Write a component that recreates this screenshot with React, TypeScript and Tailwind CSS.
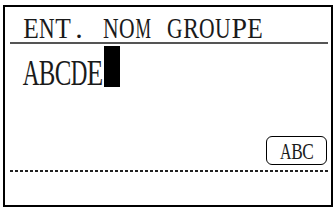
const serif = { fontFamily: '"Liberation Serif", "DejaVu Serif", serif' };

const titleScale: Record<string, string> = {
  A: "scale-x-[0.72]",
  D: "scale-x-[0.72]",
  G: "scale-x-[0.72]",
  N: "scale-x-[0.72]",
  O: "scale-x-[0.72]",
  U: "scale-x-[0.72]",
  B: "scale-x-[0.78]",
  C: "scale-x-[0.78]",
  R: "scale-x-[0.78]",
  E: "scale-x-[0.85]",
  T: "scale-x-[0.85]",
  P: "scale-x-[0.93]",
  M: "scale-x-[0.58]",
};

const inputScale: Record<string, string> = {
  A: "scale-x-[0.64]",
  D: "scale-x-[0.64]",
  B: "scale-x-[0.69]",
  C: "scale-x-[0.69]",
  E: "scale-x-[0.75]",
};

const btnScale: Record<string, string> = {
  A: "scale-x-[0.66]",
  B: "scale-x-[0.72]",
  C: "scale-x-[0.72]",
};

function TitleText({ text }: { text: string }) {
  return (
    <div className="flex" style={serif}>
      {text.split("").map((ch, i) => (
        <span key={i} className="flex justify-center w-[16px] h-[30px] text-[30px] leading-[30px] text-[#1a1a1a]">
          <span className={`inline-block shrink-0 ${titleScale[ch] ?? ""}`}>{ch === " " ? "\u00a0" : ch}</span>
        </span>
      ))}
    </div>
  );
}

function InputText({ text }: { text: string }) {
  return (
    <div className="flex" style={serif}>
      {text.split("").map((ch, i) => (
        <span key={i} className="flex justify-center w-[16px] h-[36px] text-[36px] leading-[36px] text-[#1a1a1a]">
          <span className={`inline-block shrink-0 ${inputScale[ch] ?? ""}`}>{ch}</span>
        </span>
      ))}
    </div>
  );
}

function BtnText({ text }: { text: string }) {
  return (
    <div className="flex" style={serif}>
      {text.split("").map((ch, i) => (
        <span key={i} className="flex justify-center w-[11px] h-[24px] text-[24px] leading-[24px] text-[#1a1a1a]">
          <span className={`inline-block shrink-0 ${btnScale[ch] ?? ""}`}>{ch}</span>
        </span>
      ))}
    </div>
  );
}

export default function App() {
  return (
    <div className="w-[335px] h-[209px] bg-white pt-[5px] pl-[3px]">
      <div className="w-[330px] h-[202px] border-2 border-black flex flex-col">
        <div className="ml-[5px] mr-[3px] h-[37px] border-b-2 border-[#555] pl-[13px] pt-[6px] flex items-start">
          <TitleText text="ENT. NOM GROUPE" />
        </div>
        <div className="pl-[18px] h-[43px] flex items-start">
          <div className="mt-[11px]">
            <InputText text="ABCDE" />
          </div>
          <span className="mt-[2px] ml-[1px] w-[16px] h-[41px] bg-black" />
        </div>
        <div className="flex-1" />
        <div className="flex justify-end mr-[4px]">
          <div className="w-[61px] h-[29px] border-[1.5px] border-black rounded-[6px] flex items-center justify-center">
            <BtnText text="ABC" />
          </div>
        </div>
        <div className="ml-[5px] mr-[3px] mt-[5px] mb-[33px] h-[2px] bg-[repeating-linear-gradient(to_right,#222_0_3px,transparent_3px_5px)]" />
      </div>
    </div>
  );
}
